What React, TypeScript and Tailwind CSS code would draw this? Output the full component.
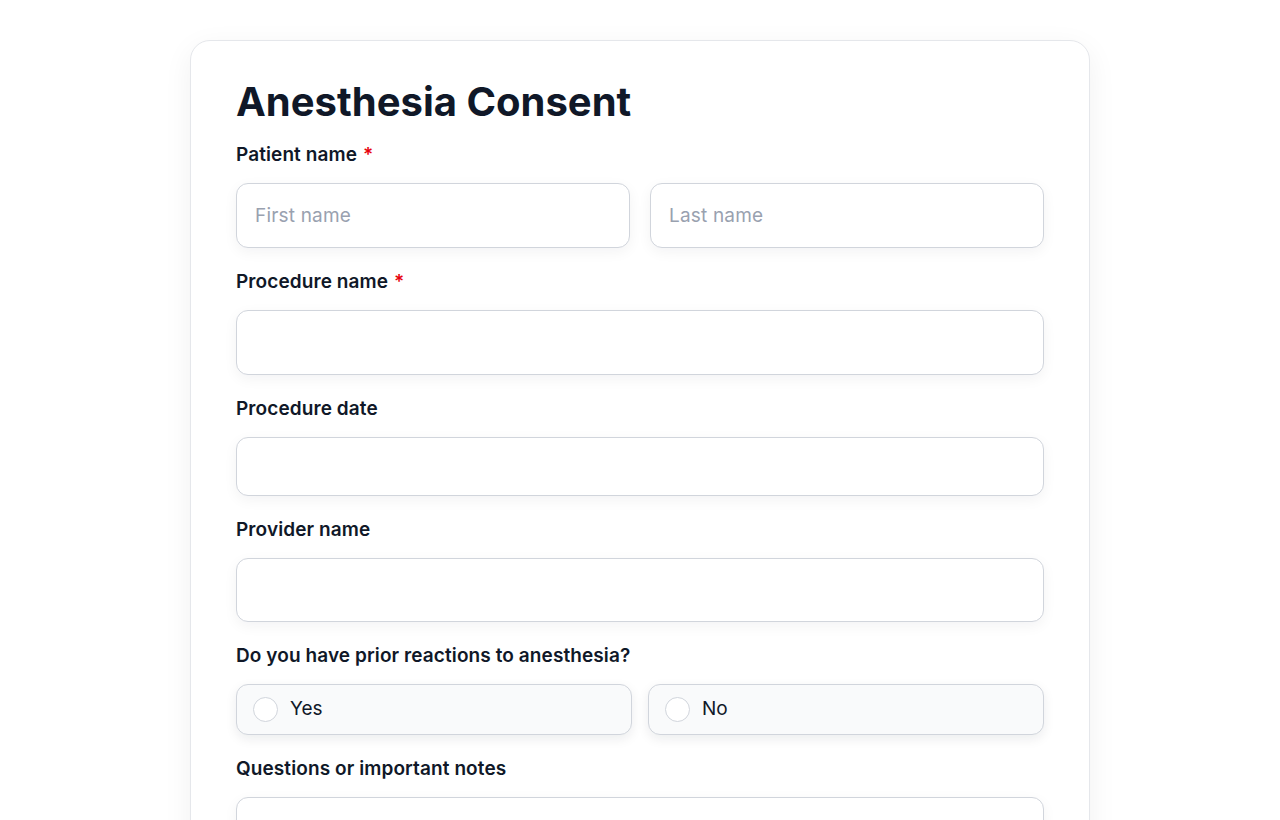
import React from 'react';

const font = { fontFamily: 'Inter, "Liberation Sans", sans-serif' };

const Label: React.FC<{ text: string; required?: boolean }> = ({ text, required }) => (
  <label className="block text-[19px] leading-[26px] font-semibold tracking-[0.005em] text-gray-900 mb-[15px]">
    {text}
    {required && <span className="text-red-600 ml-[6px]">*</span>}
  </label>
);

const inputCls =
  'w-full rounded-xl border border-gray-300 bg-white px-[18px] text-[19px] tracking-[0.01em] text-gray-900 placeholder:text-gray-400 outline-none shadow-[0_4px_14px_rgba(17,24,39,0.05)]';

const Radio: React.FC<{ label: string }> = ({ label }) => (
  <label className="flex h-[51px] items-center gap-[12px] rounded-xl border border-gray-300 bg-gray-50 px-[16px] shadow-[0_4px_12px_rgba(17,24,39,0.08)]">
    <span className="h-[25px] w-[25px] rounded-full border border-gray-300 bg-white" />
    <span className="text-[19px] text-gray-900">{label}</span>
  </label>
);

export default function App() {
  return (
    <div className="min-h-screen bg-white pt-[40px]" style={font}>
      <div className="mx-auto w-[900px] rounded-[20px] border border-gray-200 bg-white px-[45px] pt-[34px] pb-[40px] shadow-[0_8px_30px_rgba(17,24,39,0.06)]">
        <h1 className="text-[40px] leading-[54px] font-bold text-gray-900 mb-[13px]">
          Anesthesia Consent
        </h1>

        <Label text="Patient name" required />
        <div className="grid grid-cols-2 gap-[20px] mb-[21px]">
          <input className={`${inputCls} h-[65px]`} placeholder="First name" />
          <input className={`${inputCls} h-[65px]`} placeholder="Last name" />
        </div>

        <Label text="Procedure name" required />
        <input className={`${inputCls} h-[65px] mb-[21px]`} />

        <Label text="Procedure date" />
        <input className={`${inputCls} h-[59px] mb-[21px]`} />

        <Label text="Provider name" />
        <input className={`${inputCls} h-[64px] mb-[21px]`} />

        <Label text="Do you have prior reactions to anesthesia?" />
        <div className="grid grid-cols-2 gap-[16px] mb-[21px]">
          <Radio label="Yes" />
          <Radio label="No" />
        </div>

        <Label text="Questions or important notes" />
        <textarea className={`${inputCls} h-[120px] py-3 resize-none`} />
      </div>
    </div>
  );
}
